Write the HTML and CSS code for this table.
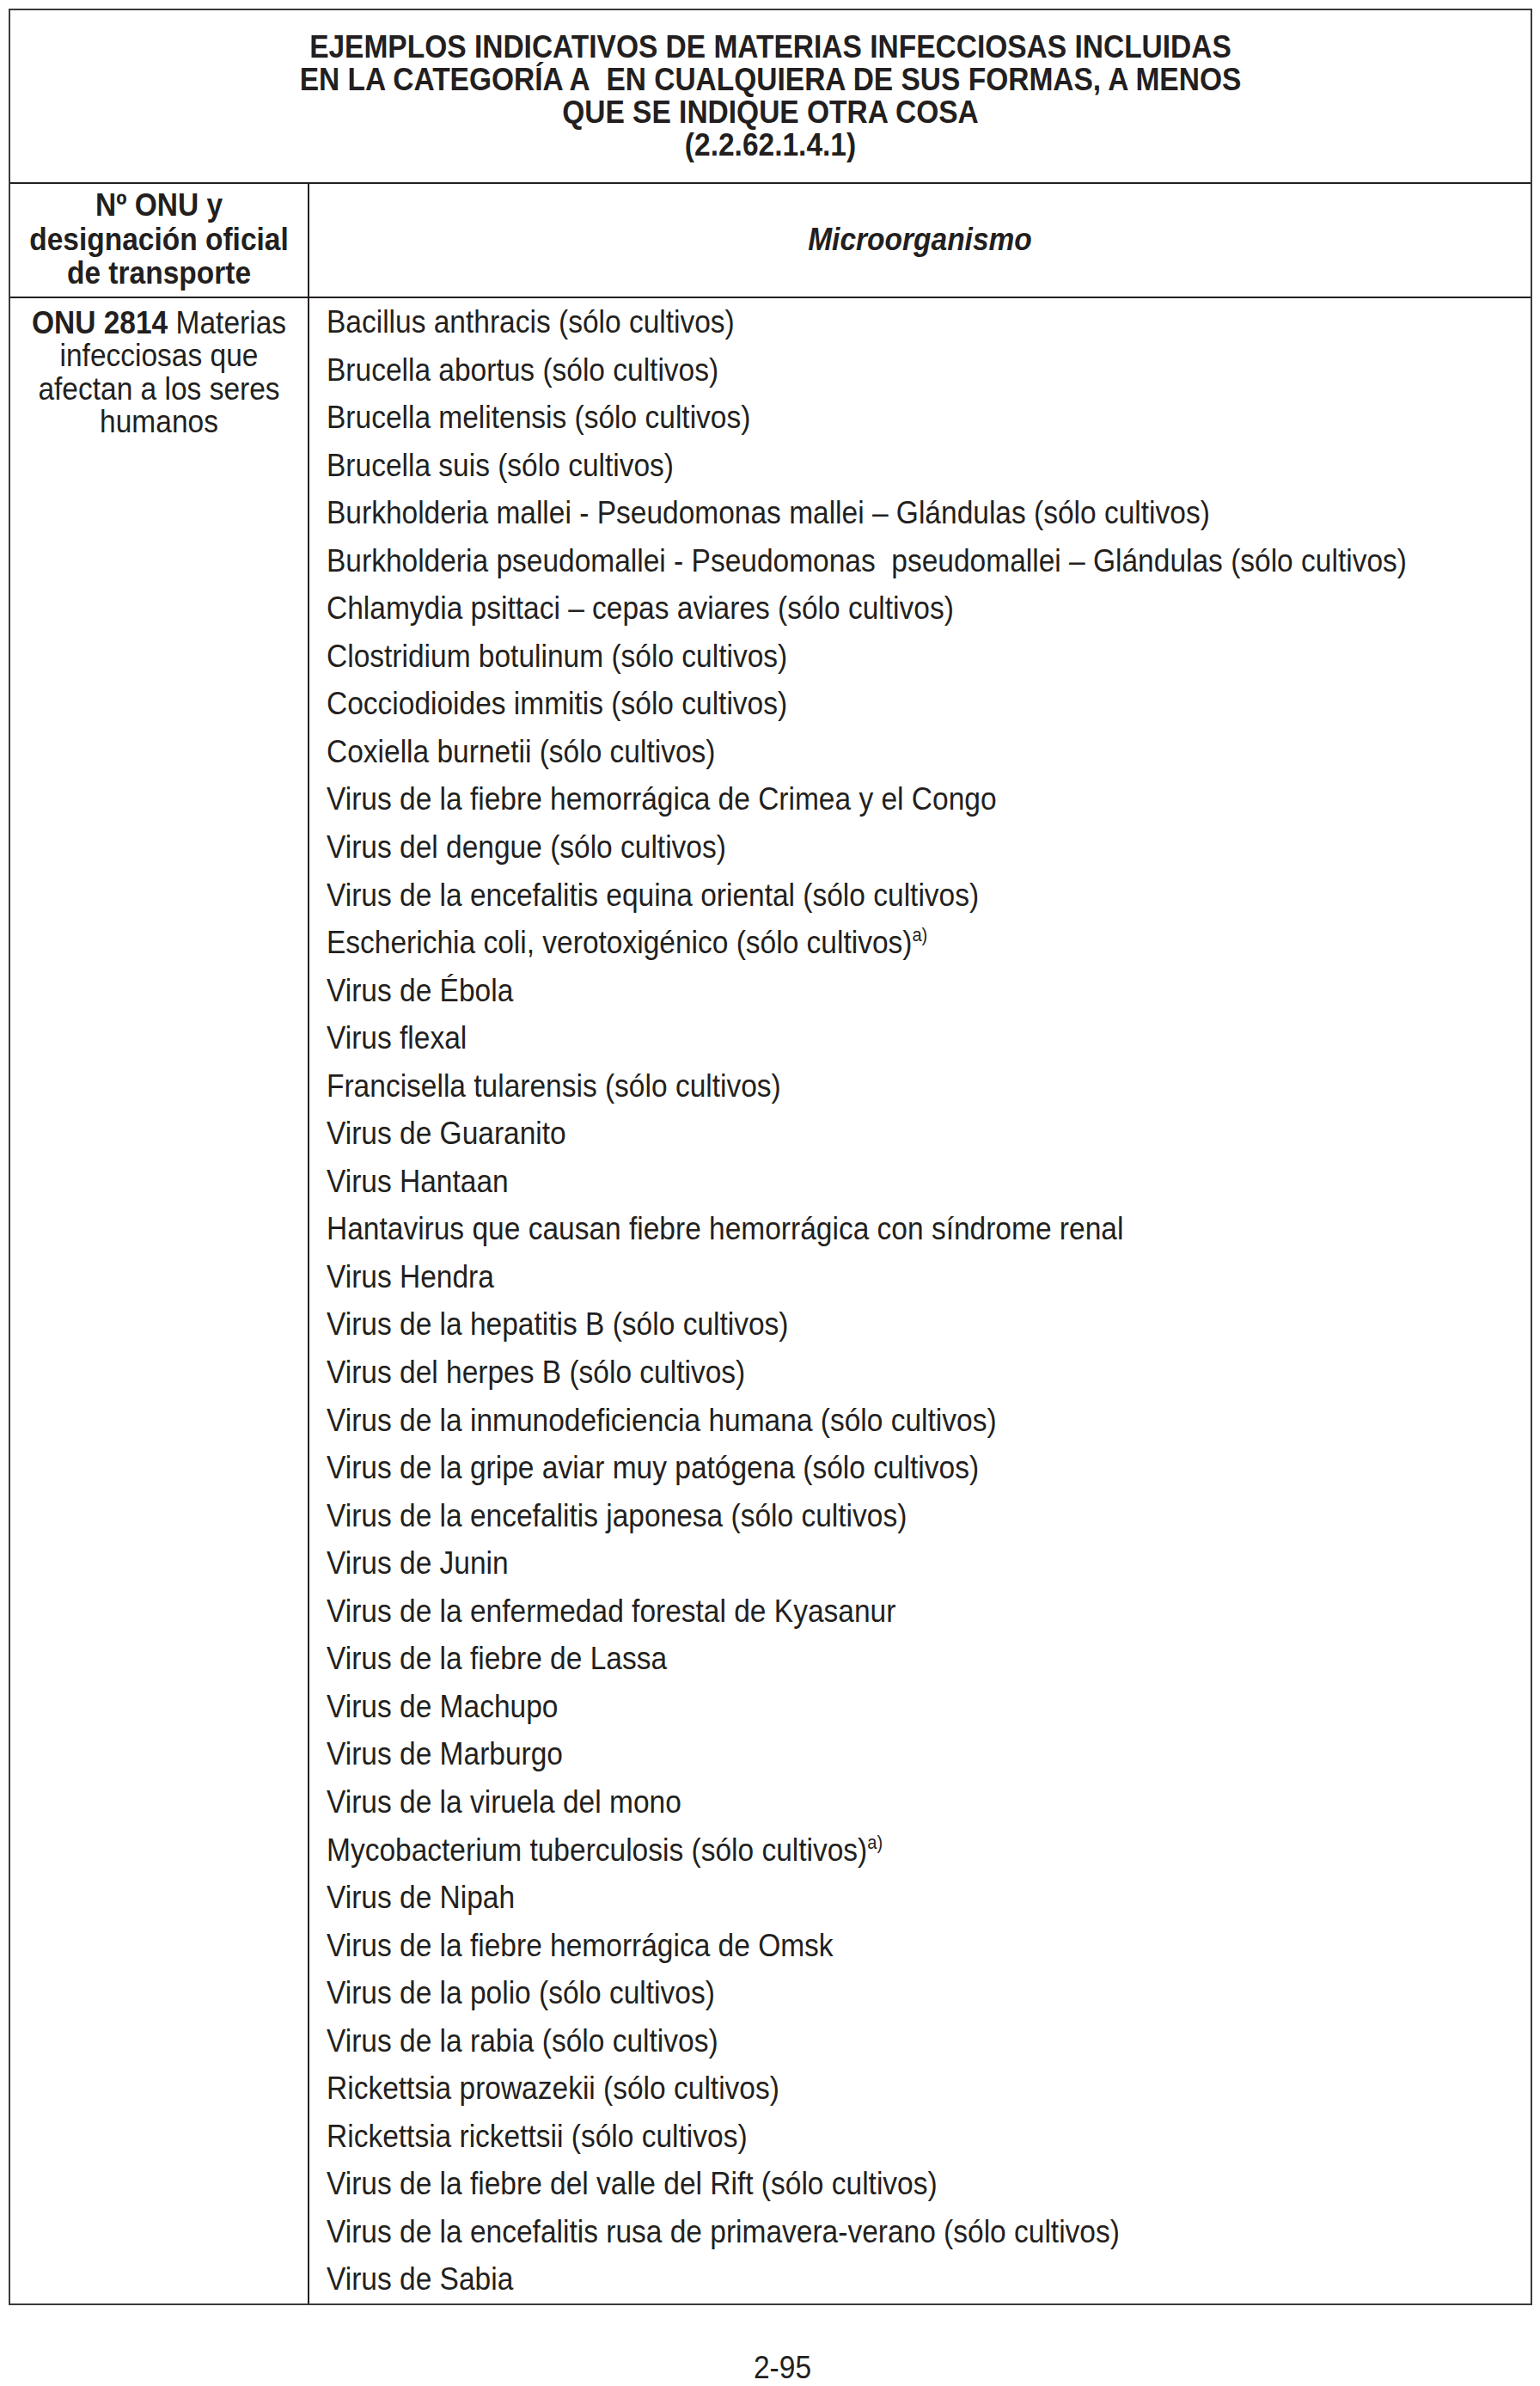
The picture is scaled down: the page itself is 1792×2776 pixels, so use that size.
FILE: index.html
```html
<!DOCTYPE html>
<html lang="es">
<head>
    <meta charset="UTF-8">
    <title>Materias infecciosas - Categoría A</title>
    <link rel="stylesheet" href="styles.css">
</head>
<body>
    <!-- Tabla 2.2.62.1.4.1 -->
    <div class="sheet">
        <div class="title">
            <div class="tall">EJEMPLOS INDICATIVOS DE MATERIAS INFECCIOSAS INCLUIDAS</div>
            <div class="tall">EN LA CATEGORÍA A&nbsp; EN CUALQUIERA DE SUS FORMAS, A MENOS</div>
            <div class="tall">QUE SE INDIQUE OTRA COSA</div>
            <div class="tall">(2.2.62.1.4.1)</div>
        </div>

        <div class="row head">
            <div class="cell left">
                <div class="label tall">Nº ONU y designación oficial de transporte</div>
            </div>
            <div class="cell right">
                <div class="label tall"><em>Microorganismo</em></div>
            </div>
        </div>

        <div class="row body">
            <div class="cell left">
                <p class="onu tall"><b>ONU 2814</b> Materias infecciosas que afectan a los seres humanos</p>
            </div>
            <div class="cell right">
                <ul class="list">
                    <li>Bacillus anthracis (sólo cultivos)</li>
                    <li>Brucella abortus (sólo cultivos)</li>
                    <li>Brucella melitensis (sólo cultivos)</li>
                    <li>Brucella suis (sólo cultivos)</li>
                    <li>Burkholderia mallei - Pseudomonas mallei – Glándulas (sólo cultivos)</li>
                    <li>Burkholderia pseudomallei - Pseudomonas&nbsp; pseudomallei – Glándulas (sólo cultivos)</li>
                    <li>Chlamydia psittaci – cepas aviares (sólo cultivos)</li>
                    <li>Clostridium botulinum (sólo cultivos)</li>
                    <li>Cocciodioides immitis (sólo cultivos)</li>
                    <li>Coxiella burnetii (sólo cultivos)</li>
                    <li>Virus de la fiebre hemorrágica de Crimea y el Congo</li>
                    <li>Virus del dengue (sólo cultivos)</li>
                    <li>Virus de la encefalitis equina oriental (sólo cultivos)</li>
                    <li>Escherichia coli, verotoxigénico (sólo cultivos)<sup>a)</sup></li>
                    <li>Virus de Ébola</li>
                    <li>Virus flexal</li>
                    <li>Francisella tularensis (sólo cultivos)</li>
                    <li>Virus de Guaranito</li>
                    <li>Virus Hantaan</li>
                    <li>Hantavirus que causan fiebre hemorrágica con síndrome renal</li>
                    <li>Virus Hendra</li>
                    <li>Virus de la hepatitis B (sólo cultivos)</li>
                    <li>Virus del herpes B (sólo cultivos)</li>
                    <li>Virus de la inmunodeficiencia humana (sólo cultivos)</li>
                    <li>Virus de la gripe aviar muy patógena (sólo cultivos)</li>
                    <li>Virus de la encefalitis japonesa (sólo cultivos)</li>
                    <li>Virus de Junin</li>
                    <li>Virus de la enfermedad forestal de Kyasanur</li>
                    <li>Virus de la fiebre de Lassa</li>
                    <li>Virus de Machupo</li>
                    <li>Virus de Marburgo</li>
                    <li>Virus de la viruela del mono</li>
                    <li>Mycobacterium tuberculosis (sólo cultivos)<sup>a)</sup></li>
                    <li>Virus de Nipah</li>
                    <li>Virus de la fiebre hemorrágica de Omsk</li>
                    <li>Virus de la polio (sólo cultivos)</li>
                    <li>Virus de la rabia (sólo cultivos)</li>
                    <li>Rickettsia prowazekii (sólo cultivos)</li>
                    <li>Rickettsia rickettsii (sólo cultivos)</li>
                    <li>Virus de la fiebre del valle del Rift (sólo cultivos)</li>
                    <li>Virus de la encefalitis rusa de primavera-verano (sólo cultivos)</li>
                    <li>Virus de Sabia</li>
                </ul>
            </div>
        </div>
    </div>

    <div class="page-number tall">2-95</div>
</body>
</html>
```

FILE: styles.css
```css
body {
    font-family: 'Liberation Sans', Arial, sans-serif;
    font-size: 33.5px;
    color: #231f20;
    background-color: #fff;
    margin: 0;
    padding: 10px 0 0 10px;
}
.tall, .list li {
    transform: scaleY(1.09);
}
.sheet {
    width: 1773px;
    border: 2px solid #3c3b3b;
    box-sizing: border-box;
}
.title {
    height: 200px;
    display: flex;
    flex-direction: column;
    justify-content: center;
    align-items: center;
    font-weight: bold;
    line-height: 38px;
    border-bottom: 2px solid #231f20;
}
.row {
    display: grid;
    grid-template-columns: 348px 1fr;
}
.head {
    height: 131px;
    border-bottom: 2px solid #231f20;
}
.head .cell {
    display: flex;
    align-items: center;
    justify-content: center;
    text-align: center;
    font-weight: bold;
}
.label {
    line-height: 36.7px;
}
.cell.left {
    border-right: 2px solid #231f20;
    padding: 0 14px;
}
.onu {
    margin: 0;
    padding-top: 15px;
    text-align: center;
    line-height: 35.3px;
}
.list {
    list-style: none;
    margin: 0;
    padding: 0 0 0 20px;
}
.list li {
    line-height: 55.55px;
    white-space: nowrap;
}
sup {
    font-size: 20px;
    line-height: 0;
    vertical-align: 13px;
}
.page-number {
    width: 1773px;
    margin-top: 53px;
    padding-left: 28px;
    box-sizing: border-box;
    text-align: center;
    line-height: 40px;
}
```
